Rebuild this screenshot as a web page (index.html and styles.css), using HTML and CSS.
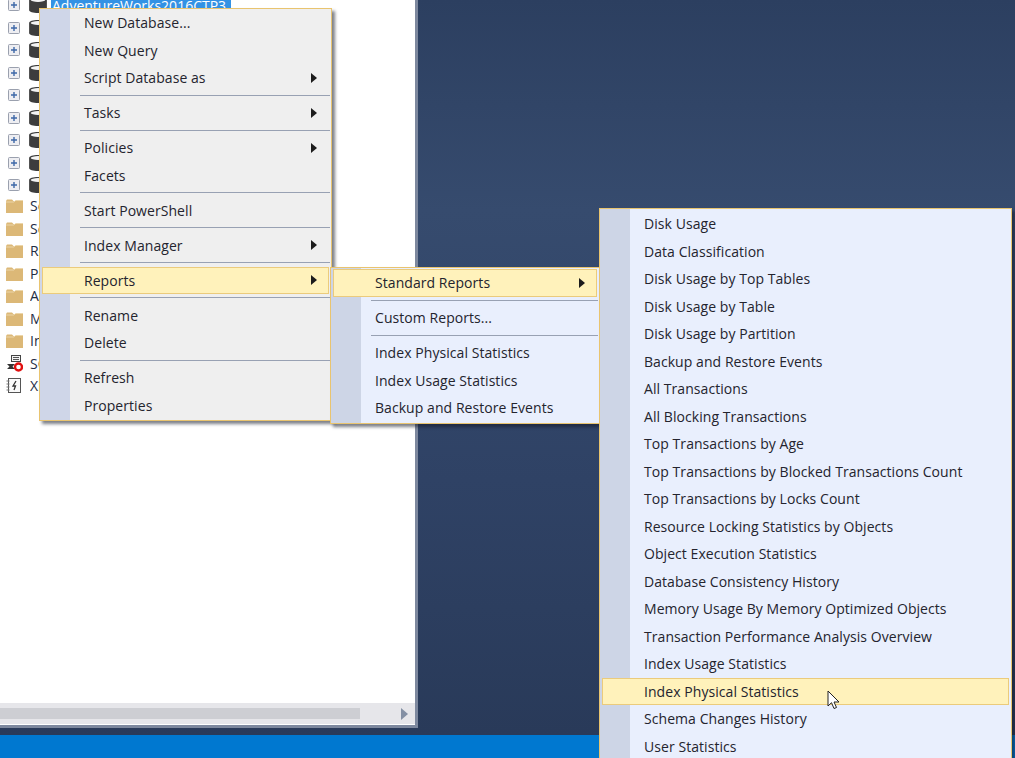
FILE: index.html
```html
<!DOCTYPE html>
<html lang="en">
<head>
<meta charset="utf-8">
<title>Reports menu</title>
<link rel="stylesheet" href="styles.css">
</head>
<body>
<svg class="defs" width="0" height="0" aria-hidden="true">
  <symbol id="plus" viewBox="0 0 12 12">
    <rect x="0.5" y="0.5" width="11" height="11" rx="1" fill="#eeeef2" stroke="#9aa0ae"/>
    <path d="M6 3v6M3 6h6" stroke="#3e68a8" stroke-width="1.4"/>
  </symbol>
  <symbol id="db" viewBox="0 0 18 16">
    <path d="M1 3.5C1 1.8 4.5.8 9 .8s8 1 8 2.7v9c0 1.700-3.500 2.700-8 2.700s-8-1-8-2.700z" fill="#3d3d3d"/>
    <ellipse cx="9" cy="3.500" rx="6.500" ry="1.700" fill="#f4f4f4"/>
  </symbol>
  <symbol id="folder" viewBox="0 0 17 16">
    <path d="M0 3.500 1 2h5l1.500 1.500H17V15.500H0z" fill="#dcb877"/>
    <path d="M0 4.500h8L9.500 3H17" fill="none" stroke="#ecd6aa"/>
  </symbol>
  <symbol id="arrow" viewBox="0 0 6 10">
    <path d="M0 0l6 5-6 5z" fill="#1c1c1c"/>
  </symbol>
</svg>

<main class="desktop">
  <section class="explorer">
    <div class="tree">
      <div class="node"><svg class="plus"><use href="#plus"/></svg><svg class="db"><use href="#db"/></svg><span class="label selected">AdventureWorks2016CTP3</span></div>
      <div class="node"><svg class="plus"><use href="#plus"/></svg><svg class="db"><use href="#db"/></svg></div>
      <div class="node"><svg class="plus"><use href="#plus"/></svg><svg class="db"><use href="#db"/></svg></div>
      <div class="node"><svg class="plus"><use href="#plus"/></svg><svg class="db"><use href="#db"/></svg></div>
      <div class="node"><svg class="plus"><use href="#plus"/></svg><svg class="db"><use href="#db"/></svg></div>
      <div class="node"><svg class="plus"><use href="#plus"/></svg><svg class="db"><use href="#db"/></svg></div>
      <div class="node"><svg class="plus"><use href="#plus"/></svg><svg class="db"><use href="#db"/></svg></div>
      <div class="node"><svg class="plus"><use href="#plus"/></svg><svg class="db"><use href="#db"/></svg></div>
      <div class="node last-db"><svg class="plus"><use href="#plus"/></svg><svg class="db"><use href="#db"/></svg></div>
      <div class="node top"><svg class="folder"><use href="#folder"/></svg><span class="label">Security</span></div>
      <div class="node top"><svg class="folder"><use href="#folder"/></svg><span class="label">Server Objects</span></div>
      <div class="node top"><svg class="folder"><use href="#folder"/></svg><span class="label">Replication</span></div>
      <div class="node top"><svg class="folder"><use href="#folder"/></svg><span class="label">PolyBase</span></div>
      <div class="node top"><svg class="folder"><use href="#folder"/></svg><span class="label">Always On</span></div>
      <div class="node top"><svg class="folder"><use href="#folder"/></svg><span class="label">Management</span></div>
      <div class="node top"><svg class="folder"><use href="#folder"/></svg><span class="label">Integration Services</span></div>
      <div class="node top">
        <svg class="folder" viewBox="0 0 17 17">
          <rect x="5.500" y="0.500" width="9" height="6" fill="#f4f4f4" stroke="#444"/>
          <path d="M7 2.500h6M7 4.500h6" stroke="#555"/>
          <path d="M1 9h8l-2.500 2.500L9 14H1l2.500-2.500z" fill="#333"/>
          <circle cx="12.500" cy="12" r="3.500" fill="#fff" stroke="#e01010" stroke-width="2.400"/>
        </svg>
        <span class="label">SQL Server Agent</span>
      </div>
      <div class="node top">
        <svg class="folder" viewBox="0 0 17 17">
          <rect x="2.500" y="1.500" width="12" height="14" fill="#fafafa" stroke="#555"/>
          <path d="M0.500 4h3M0.500 7h3M0.500 10h3M0.500 13h3" stroke="#777"/>
          <path d="M10 4 7 9h2.500L8 13" fill="none" stroke="#333" stroke-width="1.300"/>
        </svg>
        <span class="label">XEvent Profiler</span>
      </div>
    </div>
    <div class="hscroll">
      <div class="thumb"></div>
      <svg class="scroll-arrow" viewBox="0 0 7 12"><path d="M0 0l7 6-7 6z" fill="#8490a4"/></svg>
    </div>
  </section>
  <footer class="statusbar"></footer>

  <nav class="menu menu-db">
    <div class="item">New Database...</div>
    <div class="item">New Query</div>
    <div class="item sub">Script Database as<svg class="chev"><use href="#arrow"/></svg></div>
    <div class="sep"></div>
    <div class="item sub">Tasks<svg class="chev"><use href="#arrow"/></svg></div>
    <div class="sep"></div>
    <div class="item sub">Policies<svg class="chev"><use href="#arrow"/></svg></div>
    <div class="item">Facets</div>
    <div class="sep"></div>
    <div class="item">Start PowerShell</div>
    <div class="sep"></div>
    <div class="item sub">Index Manager<svg class="chev"><use href="#arrow"/></svg></div>
    <div class="sep"></div>
    <div class="item sub active">Reports<svg class="chev"><use href="#arrow"/></svg></div>
    <div class="sep"></div>
    <div class="item">Rename</div>
    <div class="item">Delete</div>
    <div class="sep"></div>
    <div class="item">Refresh</div>
    <div class="item">Properties</div>
  </nav>

  <nav class="menu menu-reports">
    <div class="item sub active">Standard Reports<svg class="chev"><use href="#arrow"/></svg></div>
    <div class="sep"></div>
    <div class="item">Custom Reports...</div>
    <div class="sep"></div>
    <div class="item">Index Physical Statistics</div>
    <div class="item">Index Usage Statistics</div>
    <div class="item">Backup and Restore Events</div>
  </nav>

  <nav class="menu menu-standard">
    <div class="item">Disk Usage</div>
    <div class="item">Data Classification</div>
    <div class="item">Disk Usage by Top Tables</div>
    <div class="item">Disk Usage by Table</div>
    <div class="item">Disk Usage by Partition</div>
    <div class="item">Backup and Restore Events</div>
    <div class="item">All Transactions</div>
    <div class="item">All Blocking Transactions</div>
    <div class="item">Top Transactions by Age</div>
    <div class="item">Top Transactions by Blocked Transactions Count</div>
    <div class="item">Top Transactions by Locks Count</div>
    <div class="item">Resource Locking Statistics by Objects</div>
    <div class="item">Object Execution Statistics</div>
    <div class="item">Database Consistency History</div>
    <div class="item">Memory Usage By Memory Optimized Objects</div>
    <div class="item">Transaction Performance Analysis Overview</div>
    <div class="item">Index Usage Statistics</div>
    <div class="item active">Index Physical Statistics</div>
    <div class="item">Schema Changes History</div>
    <div class="item">User Statistics</div>
  </nav>

  <svg class="cursor" viewBox="0 0 13 20">
    <path d="M1 1v15l3.500-3.300L7 18.500l2.500-1-2.500-5.500h5z" fill="#fff" stroke="#222" stroke-width="1"/>
  </svg>
</main>
</body>
</html>
```

FILE: styles.css
```css
* { box-sizing: border-box; }

html, body {
  margin: 0;
  height: 100%;
}

body {
  overflow: hidden;
  font-family: "Open Sans", "Noto Sans", sans-serif;
  font-size: 14px;
  color: #24242e;
}

.defs { position: absolute; }

.desktop {
  position: relative;
  width: 1015px;
  height: 758px;
  overflow: hidden;
  display: flex;
  flex-direction: column;
  background: linear-gradient(180deg, #2c3f60 0, #364b6e 210px, #2f4265 480px, #293a59 735px);
}

.explorer {
  flex: 0 0 728px;
  width: 418px;
  display: flex;
  flex-direction: column;
  background: #fff;
  border-right: 3px solid #7d889e;
  border-bottom: 3px solid #7d889e;
  overflow: hidden;
}

.tree {
  flex: 1;
  min-height: 0;
  margin-top: -6px;
}

.node {
  height: 22.5px;
  display: flex;
  align-items: center;
  padding-left: 8px;
  white-space: nowrap;
}

.node.top { padding-left: 6px; }

.last-db { margin-bottom: -2px; }

.plus { width: 12px; height: 12px; flex: none; }

.db { width: 20px; height: 18px; margin-left: 8px; flex: none; }

.folder { width: 17px; height: 17px; flex: none; }

.label {
  margin-left: 7px;
  max-width: 16px;
  overflow: hidden;
  font-size: 14px;
  color: #1f2d45;
}

.selected {
  max-width: none;
  width: 180px;
  flex: none;
  margin-left: 3px;
  background: #3392e4;
  color: #fff;
  padding: 0 1px;
  line-height: 21px;
}

.hscroll {
  flex: 0 0 21px;
  display: flex;
  align-items: center;
  justify-content: space-between;
  margin-bottom: 1px;
  padding-right: 7px;
  background: #e6e6ea;
}

.thumb {
  width: 360px;
  height: 11px;
  background: #cdced3;
}

.scroll-arrow { width: 7px; height: 12px; }

.statusbar {
  flex: 0 0 23px;
  margin-top: 7px;
  background: #0078d0;
}

.menu {
  position: absolute;
  padding: 1px 0;
  border: 1px solid #e9c46f;
  box-shadow: 3px 3px 3px rgba(20, 25, 40, .55);
  white-space: nowrap;
}

.menu-db {
  left: 39px;
  top: 8px;
  width: 293px;
  height: 413px;
  padding-top: 0;
  background: linear-gradient(90deg, #cfd6e8 30px, #efefef 30px);
}

.menu-reports {
  left: 330px;
  top: 267px;
  width: 270px;
  height: 157px;
  background: linear-gradient(90deg, #cdd5e6 30px, #e9effd 30px);
}

.menu-standard {
  left: 599px;
  top: 208px;
  width: 413px;
  height: 570px;
  background: linear-gradient(90deg, #cdd5e6 30px, #e9effd 30px);
}

.item {
  height: 27.5px;
  margin: 0 2px;
  padding-left: 41px;
  padding-right: 11px;
  display: flex;
  align-items: center;
  justify-content: space-between;
  border: 1px solid transparent;
  letter-spacing: .06px;
}

.item.active {
  background: #fff2bb;
  border-color: #ebcb7c;
}

.chev { width: 6px; height: 10px; flex: none; }

.sep {
  height: 7.5px;
  margin: 0 1px 0 40px;
  display: flex;
  align-items: center;
}

.sep::before {
  content: "";
  flex: 1;
  height: 1px;
  background: #98a1b3;
}

.cursor {
  position: absolute;
  left: 827px;
  top: 690px;
  width: 13px;
  height: 20px;
}
```
